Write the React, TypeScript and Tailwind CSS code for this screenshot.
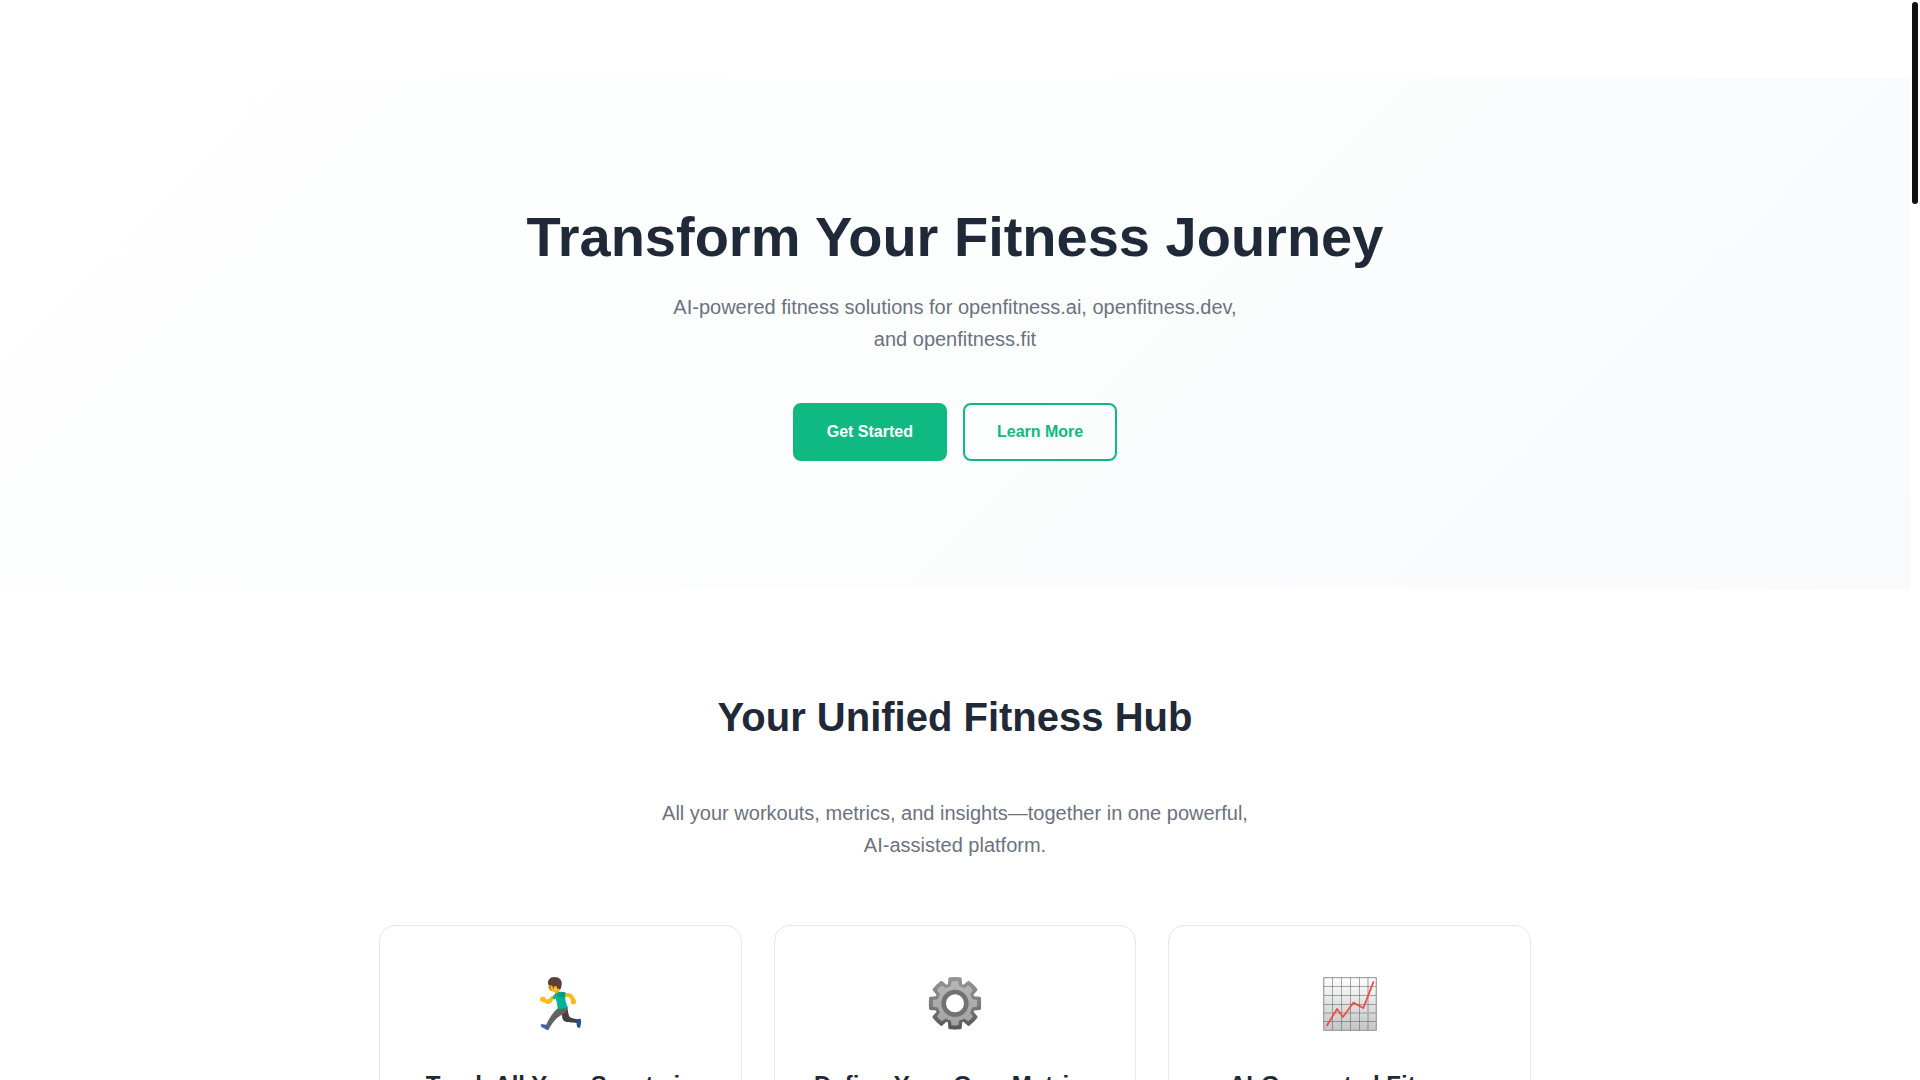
import type { ReactNode } from 'react';

const toothAngles = [0, 45, 90, 135, 180, 225, 270, 315];

function RunnerIcon() {
  return (
    <svg viewBox="24 51 162 162" className="w-[54px] h-[54px]" role="img" aria-label="Runner">
      {/* back leg and shoe */}
      <path d="M108 148 L127 139 C128 151 130 165 134 171 C141 176 152 176 158 178 L156 189 C142 187 126 188 117 183 C110 177 111 160 108 148 Z" fill="#424242" />
      <path d="M156 178 L167 176 C170 184 167 196 165 203 L158 203 C154 197 154 186 156 178 Z" fill="#2a4f96" />
      {/* front leg and shoe */}
      <path d="M96 147 C105 139 118 138 127 140 C128 150 123 158 114 162 C95 172 86 184 73 204 L62 197 C72 175 84 158 96 147 Z" fill="#636363" />
      <path d="M49 192 C56 192 62 195 67 197 L74 203 L69 211 C61 207 51 203 47 197 Z" fill="#3c63ab" />
      {/* back arm */}
      <path d="M114 98 C123 98 134 99 140 103 C146 109 150 117 153 122 C156 127 151 132 147 133 C142 134 136 130 137 126 C141 123 136 117 132 112 L117 110 Z" fill="#fdba14" />
      {/* front arm */}
      <path d="M87 112 C84 122 80 131 70 132 C62 131 55 126 47 124 C43 119 45 111 51 110 L60 111 L62 117 C68 120 73 116 81 107 Z" fill="#fdba14" />
      {/* shirt */}
      <path d="M82 113 C87 102 95 97 101 96 C108 94 115 97 121 97 C121 109 119 119 127 140 C119 146 106 148 98 146 C97 137 96 127 92 115 L88 119 Z" fill="#00b49a" />
      <path d="M93 103 C99 94 111 95 121 98 L119 112 C110 114 99 113 93 103 Z" fill="#009e86" />
      {/* head */}
      <path d="M82 89 L102 85 L103 94 C99 100 91 100 86 95 Z" fill="#f5ad0c" />
      <path d="M71 71 C74 61 90 59 102 67 L104 84 C99 94 90 98 81 94 C74 93 71 88 72 84 L69 82 Z" fill="#fec11d" />
      <path d="M70 74 C66 61 75 51 88 51 C103 51 113 61 110 75 C109 83 107 89 103 91 C104 86 100 84 97 86 L94 78 C87 80 77 77 70 74 Z" fill="#5d4038" />
      <path d="M75 80 v5 M85 79 v5" stroke="#4e342e" strokeWidth="3" strokeLinecap="round" />
      <path d="M76 89 L82 90" stroke="#a05b16" strokeWidth="2" />
    </svg>
  );
}

function GearIcon() {
  return (
    <svg viewBox="39 38 162 162" className="w-[54px] h-[54px]" role="img" aria-label="Gear">
      <defs>
        <linearGradient id="gearEdge" gradientUnits="userSpaceOnUse" x1="0" y1="38" x2="0" y2="196">
          <stop offset="0" stopColor="#959595" />
          <stop offset="0.5" stopColor="#7d7d7d" />
          <stop offset="1" stopColor="#555555" />
        </linearGradient>
        <linearGradient id="gearFace" gradientUnits="userSpaceOnUse" x1="0" y1="38" x2="0" y2="196">
          <stop offset="0" stopColor="#b8b8b8" />
          <stop offset="1" stopColor="#a0a0a0" />
        </linearGradient>
        <mask id="gearHole">
          <rect x="39" y="36" width="162" height="162" fill="white" />
          <circle cx="120" cy="117" r="27" fill="black" />
        </mask>
        <clipPath id="gearTeeth">
          <circle cx="120" cy="117" r="61" />
          {toothAngles.map((angle) => (
            <path key={angle} d="M98 70 L100 42 Q101 39 105 39 Q120 37 135 39 Q139 39 140 42 L142 70 Z" transform={`rotate(${angle} 120 117)`} />
          ))}
        </clipPath>
        <clipPath id="gearInner">
          <circle cx="120" cy="117" r="53" />
          {toothAngles.map((angle) => (
            <path key={angle} d="M106 72 L110 51 Q120 49 130 51 L134 72 Z" transform={`rotate(${angle} 120 117)`} />
          ))}
        </clipPath>
      </defs>
      <g mask="url(#gearHole)">
        <rect x="39" y="36" width="162" height="162" fill="url(#gearEdge)" clipPath="url(#gearTeeth)" />
        <rect x="39" y="36" width="162" height="162" fill="url(#gearFace)" clipPath="url(#gearInner)" />
        <circle cx="120" cy="117" r="41" fill="#727272" />
      </g>
    </svg>
  );
}

function ChartIcon() {
  return (
    <svg viewBox="39 36 162 162" className="w-[54px] h-[54px]" role="img" aria-label="Rising chart">
      <defs>
        <linearGradient id="chartPaper" x1="0" y1="0" x2="0" y2="1">
          <stop offset="0" stopColor="#ffffff" />
          <stop offset="1" stopColor="#c3c4c5" />
        </linearGradient>
      </defs>
      <rect x="41" y="38" width="158" height="158" rx="1" fill="url(#chartPaper)" stroke="#a3a5a6" strokeWidth="4" />
      <path d="M67.5 38 V196 M94.5 38 V196 M121.5 38 V196 M148.5 38 V196 M41 64.5 H199 M41 91.5 H199 M41 118.5 H199 M41 169.5 H199" stroke="#555759" strokeOpacity="0.6" strokeWidth="2.5" />
      <path d="M174 38 V196 M41 144 H199" stroke="#777a7c" strokeOpacity="0.45" strokeWidth="5" />
      <path d="M50 183 L81 132 L99 156 L130 113 L160 129 L191 49" fill="none" stroke="#ee5140" strokeWidth="5.5" strokeLinejoin="round" />
    </svg>
  );
}

const features: { title: string; icon: ReactNode }[] = [
  { title: 'Track All Your Sports in One Place', icon: <RunnerIcon /> },
  { title: 'Define Your Own Metrics', icon: <GearIcon /> },
  { title: 'AI-Generated Fitness Insights', icon: <ChartIcon /> },
];

export default function App() {
  return (
    <div className="flex h-screen overflow-hidden bg-white font-['Liberation_Sans',Arial,sans-serif] text-gray-800">
      <div className="min-w-0 flex-1">
        <header className="h-[78px]" />

        <main>
          {/* Hero */}
          <section className="bg-[linear-gradient(135deg,#ffffff_0%,#fcfdfd_55%,#f8fafc_100%)] px-6 py-32 text-center">
            <h1 className="mb-6 text-[56px] leading-[61px] font-bold text-[#1f2937]">Transform Your Fitness Journey</h1>
            <p className="mx-auto mb-12 max-w-[600px] text-[20px] leading-8 text-[#6b7280]">
              AI-powered fitness solutions for openfitness.ai, openfitness.dev, and openfitness.fit
            </p>
            <div className="flex flex-wrap justify-center gap-4">
              <button className="rounded-lg border-2 border-[#10b981] bg-[#10b981] px-8 py-3.5 text-base leading-[26px] font-semibold text-white">
                Get Started
              </button>
              <button className="rounded-lg border-2 border-[#10b981] px-8 py-3.5 text-base leading-[26px] font-semibold text-[#10b981]">
                Learn More
              </button>
            </div>
          </section>

          {/* Features */}
          <section className="px-6 py-24 text-center">
            <h2 className="mb-12 text-[40px] leading-[64px] font-bold text-[#1f2937]">Your Unified Fitness Hub</h2>
            <p className="mx-auto mb-16 max-w-[600px] text-[20px] leading-8 text-[#6b7280]">
              All your workouts, metrics, and insights—together in one powerful, AI-assisted platform.
            </p>
            <div className="mx-auto grid max-w-6xl grid-cols-3 gap-8">
              {features.map((feature) => (
                <article key={feature.title} className="rounded-2xl border border-[#e5e7eb] bg-white px-8 py-10">
                  <div className="mb-6 flex h-[76px] items-center justify-center">{feature.icon}</div>
                  <h3 className="text-2xl leading-[38px] font-bold text-[#1f2937]">{feature.title}</h3>
                </article>
              ))}
            </div>
          </section>
        </main>
      </div>

      {/* Scrollbar */}
      <div className="w-2.5 shrink-0 py-0.5 pl-0.5" aria-hidden="true">
        <div className="h-[202px] w-1.5 rounded-full bg-[#111111]" />
      </div>
    </div>
  );
}
